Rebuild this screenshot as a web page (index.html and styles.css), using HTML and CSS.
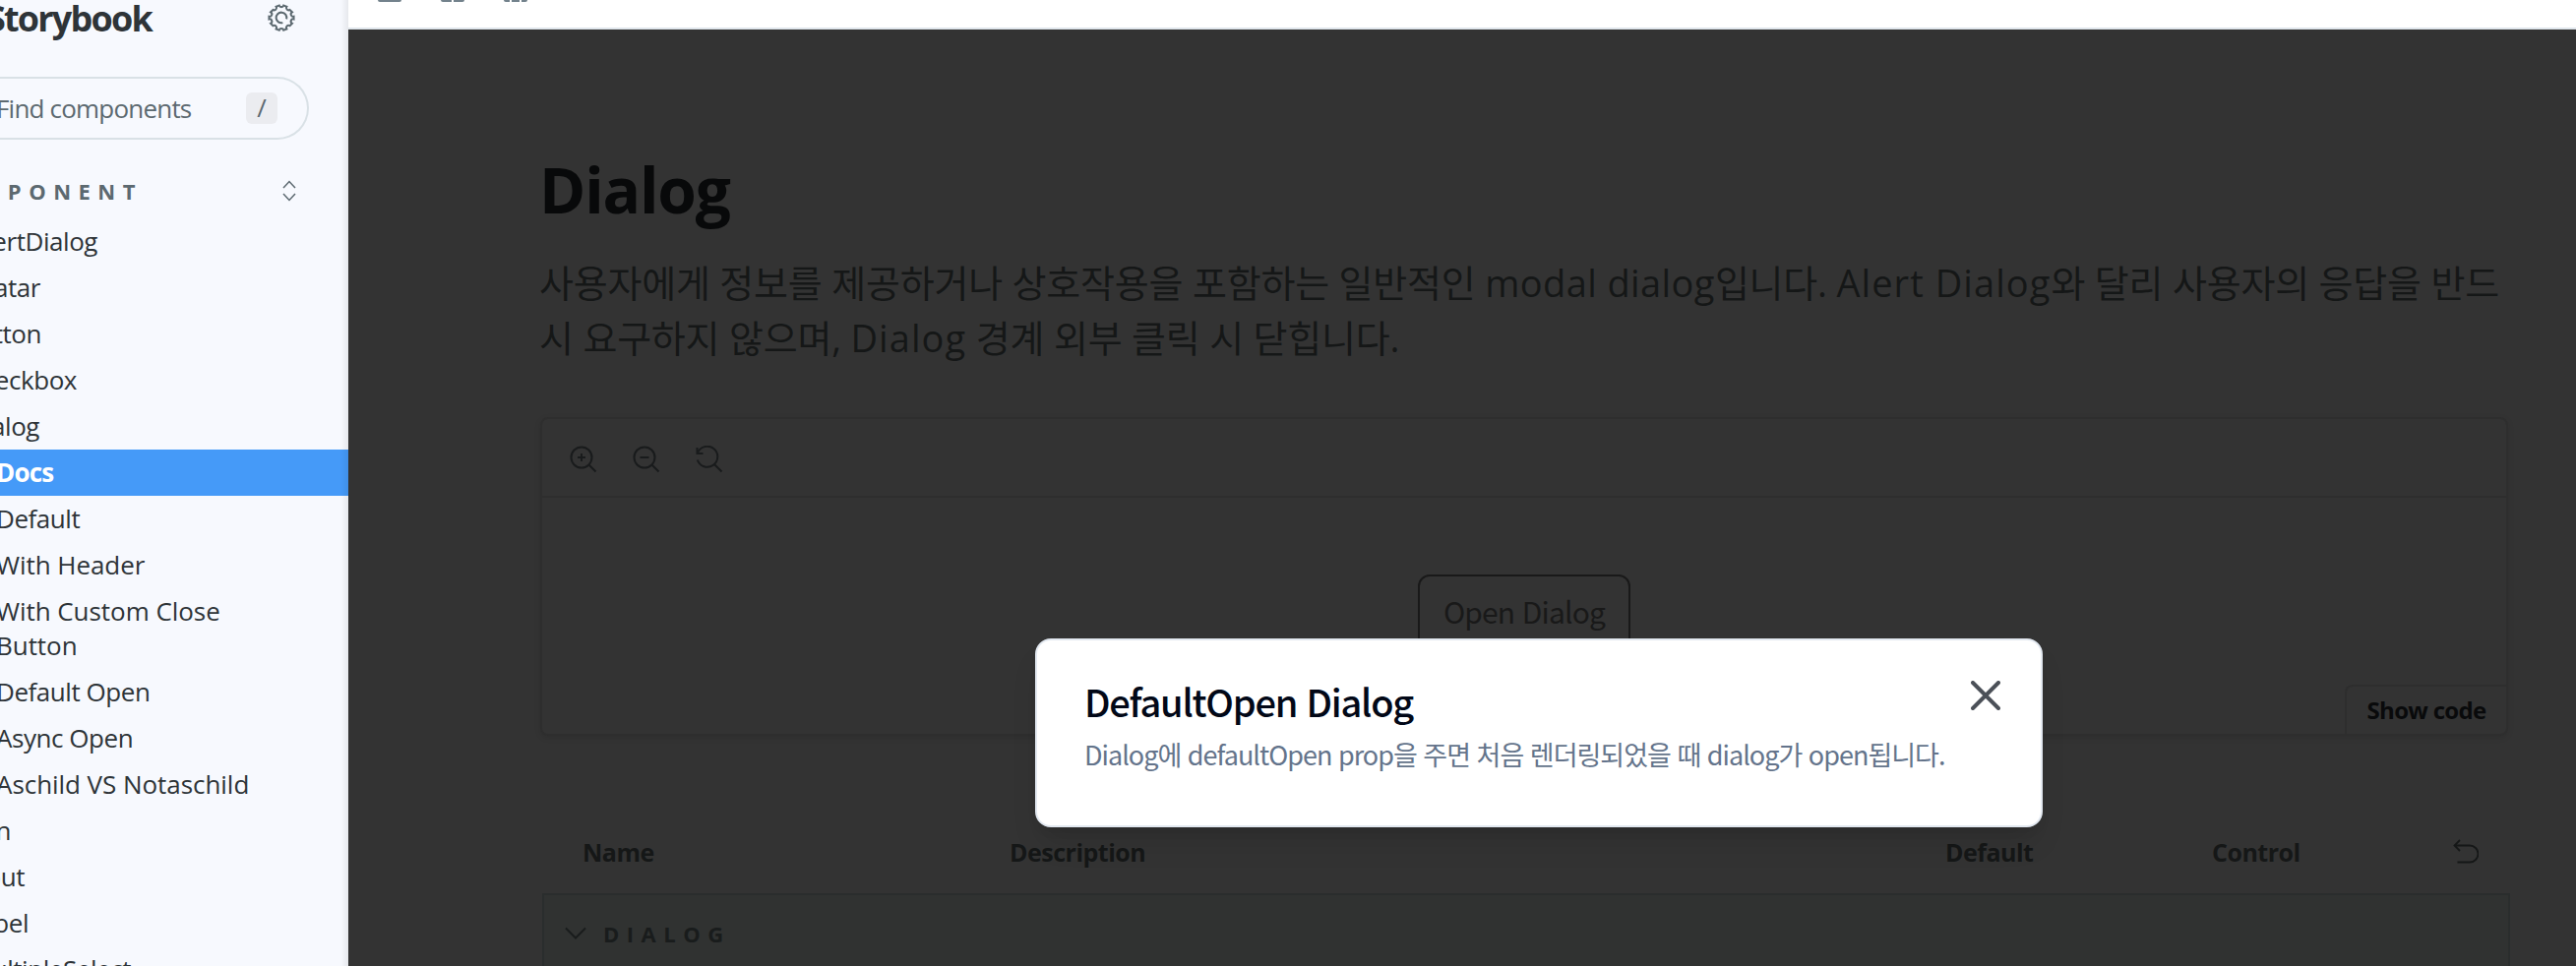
FILE: index.html
```html
<!DOCTYPE html>
<html lang="ko">
<head>
<meta charset="utf-8">
<title>Dialog - Docs ⋅ Storybook</title>
<link rel="stylesheet" href="styles.css">
</head>
<body>
<div class="app">
  <aside class="sidebar">
    <header class="brand">
      <div class="brand-name"><span>Storybook</span></div>
      <svg class="gear" viewBox="0 0 28 28"><path d="M11.900 2.300a2.200 2.200 0 0 0 4.200 0l2.900 1.100a2.200 2.200 0 0 0 3 3.100l2.200 2.200a2.200 2.200 0 0 0 1.500 4.100v2.500a2.200 2.200 0 0 0-1.500 4.100l-2.200 2.200a2.200 2.200 0 0 0-3 3.100l-2.900 1.100a2.200 2.200 0 0 0-4.200 0L9 24.700a2.200 2.200 0 0 0-3-3.100l-2.200-2.200a2.200 2.200 0 0 0-1.500-4.100v-2.500a2.200 2.200 0 0 0 1.500-4.100L6 6.500a2.200 2.200 0 0 0 3-3.100z"/><path d="M15.300 18.800a5 5 0 1 1 3.500-3.500"/></svg>
    </header>
    <div class="search"><span class="search-label">Find components</span><kbd class="key">/</kbd></div>
    <div class="group"><span class="group-label">COMPONENT</span>
      <svg class="sort" viewBox="0 0 14 22"><path d="M1 8l6-6.500L13 8M1 14l6 6.500L13 14"/></svg>
    </div>
    <nav class="tree">
      <a class="item end" style="--e:99px"><span>AlertDialog</span></a>
      <a class="item end" style="--e:41px"><span>Avatar</span></a>
      <a class="item end" style="--e:42px"><span>Button</span></a>
      <a class="item end" style="--e:78px"><span>Checkbox</span></a>
      <a class="item end" style="--e:40px"><span>Dialog</span></a>
      <a class="item active"><span>Docs</span></a>
      <a class="item"><span>Default</span></a>
      <a class="item wide"><span>With Header</span></a>
      <a class="item wide"><span>With Custom Close<br>Button</span></a>
      <a class="item"><span>Default Open</span></a>
      <a class="item"><span>Async Open</span></a>
      <a class="item wide"><span>Aschild VS Notaschild</span></a>
      <a class="item end" style="--e:11px"><span>Icon</span></a>
      <a class="item end" style="--e:25px"><span>Input</span></a>
      <a class="item end" style="--e:29px"><span>Label</span></a>
      <a class="item end" style="--e:133px"><span>MultipleSelect</span></a>
    </nav>
  </aside>
  <main class="main">
    <div class="toolbar"><i class="vp one"></i><i class="vp two"></i><i class="vp three"></i></div>
    <section class="canvas">
      <h1 class="title">Dialog</h1>
      <p class="lead">사용자에게 정보를 제공하거나 상호작용을 포함하는 일반적인 <span class="latin">modal dialog</span>입니다. <span class="latin loose">Alert Dialog</span>와 달리 사용자의 응답을 반드<br>시 요구하지 않으며, <span class="latin loose">Dialog</span> 경계 외부 클릭 시 닫힙니다.</p>
      <div class="preview">
        <div class="preview-bar">
          <svg class="zoom" viewBox="0 0 28 28"><circle cx="12" cy="12" r="10.500"/><path d="M19.500 19.500l7 7M12 8v8M8 12h8"/></svg>
          <svg class="zoom" viewBox="0 0 28 28"><circle cx="12" cy="12" r="10.500"/><path d="M19.500 19.500l7 7M7.500 12h9"/></svg>
          <svg class="zoom" viewBox="0 0 28 28"><path d="M1.500 2v6h6M2 7.500A10.500 10.500 0 1 1 1.800 14.500M19.500 19.500l7 7"/></svg>
        </div>
        <div class="stage"><button class="open">Open Dialog</button></div>
        <button class="show-code">Show code</button>
      </div>
      <div class="args">
        <div class="args-head"><b>Name</b><b>Description</b><b>Default</b><b>Control</b>
          <svg class="undo" viewBox="0 0 26 26"><path d="M7 1L1.500 6.500 7 12M1.500 6.500H17a8.500 8.500 0 0 1 0 17H4.500"/></svg>
        </div>
        <div class="args-section">
          <svg class="chev" viewBox="0 0 22 14"><path d="M1 1.500l10 10 10-10"/></svg><span>DIALOG</span>
        </div>
      </div>
    </section>
  </main>
  <div class="modal" role="dialog">
    <h2 class="modal-title">DefaultOpen Dialog</h2>
    <p class="modal-text">Dialog에 defaultOpen prop을 주면 처음 렌더링되었을 때 dialog가 open됩니다.</p>
    <svg class="close" viewBox="0 0 30 30"><path d="M2 2l26 26M28 2L2 28"/></svg>
  </div>
</div>
</body>
</html>
```
FILE: styles.css
```css
* { box-sizing: border-box; }
body { margin: 0; background: #fff; font-family: "Open Sans", "Noto Sans CJK KR", sans-serif; }
svg { fill: none; stroke: currentColor; flex: none; }
.app { position: relative; display: flex; width: 2618px; height: 982px; overflow: hidden; }

.sidebar { width: 354px; flex: none; height: 982px; overflow: hidden; background: linear-gradient(90deg, transparent 346px, rgba(0,0,0,.07) 354px), #f7f9fe; color: #2e3438; }
.brand { height: 78px; display: flex; justify-content: space-between; padding: 0 53px 0 0; }
.brand-name { width: 154px; display: flex; justify-content: flex-end; font: 700 36px/38px "Open Sans", sans-serif; letter-spacing: -1.8px; }
.gear { width: 30px; height: 30px; margin-top: 3px; stroke-width: 1.9; color: #5c6970; }
.search { width: 314px; height: 64px; border: 2px solid #d9e1e6; border-left: 0; border-radius: 0 32px 32px 0; display: flex; align-items: center; justify-content: space-between; padding-right: 30px; }
.search-label { font-size: 26px; letter-spacing: -.8px; color: #5c6970; margin-left: -4px; white-space: nowrap; }
.key { width: 32px; height: 32px; border-radius: 6px; background: #ebecf0; font: 26px/31px "Open Sans", sans-serif; text-align: center; color: #5c6970; }
.group { height: 80px; padding: 25px 53px 0 0; display: flex; justify-content: space-between; color: #5c6970; }
.group-label { width: 145px; display: flex; justify-content: flex-end; font: 700 22px/54px "Open Sans", sans-serif; letter-spacing: 7.5px; }
.sort { width: 14px; height: 22px; margin: 16px 0 0; stroke-width: 1.5; }
.tree { display: flex; flex-direction: column; }
.item { font-size: 26px; line-height: 35px; letter-spacing: -.45px; padding: 6px 0; white-space: nowrap; display: flex; }
.item span { margin-left: -4px; }
.item.wide { letter-spacing: -.05px; }
.item.end { width: var(--e); justify-content: flex-end; }
.item.end span { margin: 0; }
.item.active { background: linear-gradient(90deg, transparent 346px, rgba(0,0,0,.07) 354px), #459af8; color: #fff; font-weight: 700; letter-spacing: -.8px; }

.main { flex: 1; min-width: 0; display: flex; flex-direction: column; }
.toolbar { flex: none; height: 30px; border-bottom: 2px solid #dfe5eb; display: flex; gap: 40px; padding-left: 30px; }
.vp { width: 24px; height: 2px; background: #73828c; border-radius: 0 0 2px 2px; }
.vp.two { background: linear-gradient(90deg, #73828c 11px, transparent 11px 13px, #73828c 13px); }
.vp.three { background: linear-gradient(90deg, #73828c 6px, transparent 6px 8px, #73828c 8px 16px, transparent 16px 18px, #73828c 18px); }
.canvas { flex: 1; min-height: 0; background: #333; padding: 123px 69px 0 195px; color: #151717; }
.title { margin: 0; font: 700 64px/80px "Open Sans", sans-serif; letter-spacing: -1.2px; margin-left: -1px; color: #08090a; }
.lead { margin: 26px 0 0 -1px; font-size: 38px; line-height: 56px; letter-spacing: -.22px; white-space: nowrap; }
.latin { letter-spacing: .4px; }
.latin.loose { letter-spacing: 1.05px; }
.preview { position: relative; margin-top: 53px; height: 324px; border: 2px solid #2e2e2e; border-radius: 8px; box-shadow: 0 2px 6px rgba(0,0,0,.1); }
.preview-bar { height: 80px; border-bottom: 2px solid #2e2e2e; display: flex; gap: 36px; padding: 27px 0 0 28px; }
.zoom { width: 28px; height: 28px; stroke-width: 2; color: #191b1c; }
.stage { display: flex; justify-content: center; padding-top: 78px; }
.open { width: 216px; height: 78px; background: none; border: 2px solid #191919; border-radius: 12px; font: 30px/44px "Noto Sans CJK KR", sans-serif; letter-spacing: -.85px; color: #191919; padding: 0 0 4px; white-space: nowrap; }
.show-code { position: absolute; right: 0; bottom: 0; width: 164px; height: 50px; background: none; border: 2px solid #2e2e2e; border-width: 2px 0 0 2px; border-radius: 8px 0 0 0; font: 700 24px/32px "Open Sans", sans-serif; letter-spacing: -.7px; color: #090a0b; padding: 0; white-space: nowrap; }
.args { margin: 78px -2px 0 2px; }
.args-head { height: 82px; padding: 0 0 0 41px; display: grid; grid-template-columns: 434px 951px 271px 245px auto; font-size: 25px; line-height: 80px; letter-spacing: -.5px; }
.undo { width: 26px; height: 26px; margin-top: 27px; stroke-width: 1.8; }
.args-section { height: 76px; border: 2px solid #2a2d2d; border-bottom: 0; background: #303231; display: flex; align-items: center; gap: 17px; padding: 3px 0 0 21px; color: #191c1c; font: 700 22px/30px "Open Sans", sans-serif; letter-spacing: 7.5px; }
.chev { width: 22px; height: 14px; stroke-width: 2; }

.modal { position: absolute; left: 1052px; top: 649px; width: 1024px; height: 192px; background: #fff; border: 2px solid #e2e8f0; border-radius: 16px; box-shadow: 0 20px 30px -6px rgba(0,0,0,.12), 0 8px 12px -6px rgba(0,0,0,.1); padding: 35px 48px; white-space: nowrap; }
.modal-title { margin: 0; font: 500 38px/54px "Noto Sans CJK KR", sans-serif; letter-spacing: -1.25px; color: #020817; }
.modal-text { margin: 3px 0 0; font: 27px/48px "Noto Sans CJK KR", sans-serif; letter-spacing: -1px; color: #64748b; }
.close { position: absolute; right: 41px; top: 41px; width: 30px; height: 30px; stroke-width: 4; stroke-linecap: round; color: #4b5058; }
```
